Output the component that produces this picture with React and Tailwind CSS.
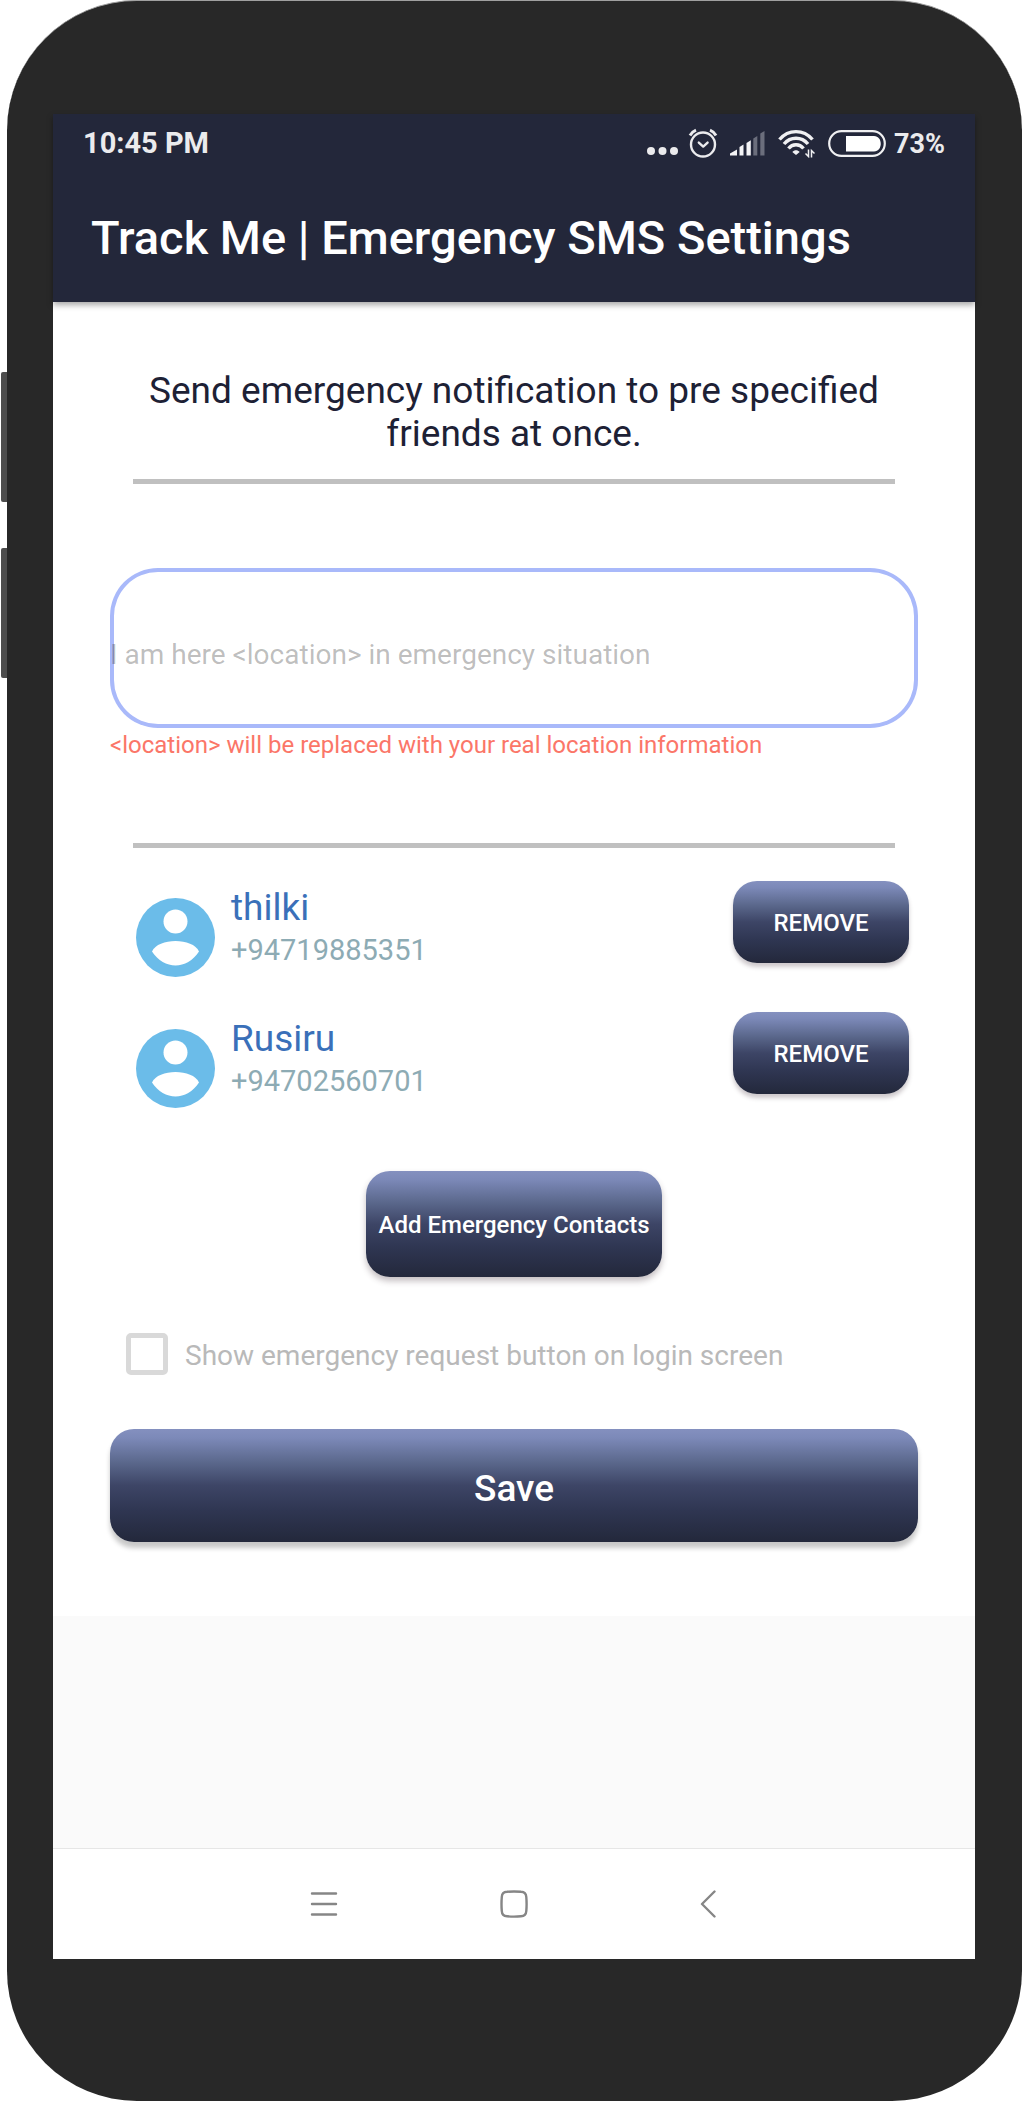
import { useState } from "react";

const gradient =
  "bg-[linear-gradient(to_bottom,#8490bf_0%,#7c89b8_8%,#5a678b_30%,#3d4566_50%,#2f3652_72%,#23283b_100%)] pt-0.5 text-white font-medium";

function AlarmIcon() {
  return (
    <svg width="30" height="30" viewBox="0 0 30 30" fill="none" stroke="#ebebed" strokeLinecap="round" strokeLinejoin="round" aria-hidden="true">
      <circle cx="15" cy="16.5" r="12" strokeWidth="2.4" />
      <path d="M10.8 14.6 L15.2 18.6 L19.6 14.6" strokeWidth="2.4" />
      <path d="M2 7.5 C3.5 5 5.5 3.2 8 2.2 M28 7.5 C26.5 5 24.5 3.2 22 2.2" strokeWidth="3" strokeLinecap="butt" />
    </svg>
  );
}

function SignalIcon() {
  return (
    <svg width="35" height="26" viewBox="0 0 35 26" fill="#f4f4f6" aria-hidden="true">
      <path d="M0 25.5 V23.5 L7 19.5 V25.5 Z" />
      <path d="M9.5 25.5 V17 L13.5 14.5 V25.5 Z" />
      <path d="M16.5 25.5 V13 L20.8 10.3 V25.5 Z" />
      <path d="M23.3 25.5 V8.5 L27.3 6 V25.5 Z" fill="#6b6e7c" />
      <path d="M30.3 25.5 V3.5 L34.5 1 V25.5 Z" fill="#6b6e7c" />
    </svg>
  );
}

function WifiIcon() {
  return (
    <svg width="37" height="30" viewBox="0 0 37 30" fill="none" stroke="#f0f0f2" strokeWidth="3.4" aria-hidden="true">
      <path d="M1.5 11.5 C10.5 1 25.5 1 34.5 11.5" />
      <path d="M6 16 C12.5 8.3 23.5 8.3 30 16" />
      <path d="M10.5 20.5 C14.5 15.5 21.5 15.5 25.5 20.5" />
      <path d="M14.3 24 C16.4 21.6 19.6 21.6 21.7 24 L18 27 Z" fill="#f0f0f2" stroke="none" />
      <path d="M27.5 25.5 L30.5 28.5 V21.5 M33.500 29.500 V22.500 L36.500 25.500" strokeWidth="1.5" />
    </svg>
  );
}

function BatteryIcon() {
  return (
    <svg width="58" height="27" viewBox="0 0 58 27" fill="none" aria-hidden="true">
      <rect x="1.2" y="1.2" width="55.6" height="24.6" rx="12.3" stroke="#f0f0f2" strokeWidth="2.2" />
      <path d="M18 6 H46 C55 6 55 21.5 46 21.5 H18 Z" fill="#fff" />
    </svg>
  );
}

function Avatar() {
  return (
    <svg className="shrink-0" width="79" height="79" viewBox="0 0 79 79" aria-hidden="true">
      <circle cx="39.5" cy="39.5" r="39.5" fill="#6bbce9" />
      <circle cx="39.5" cy="23.5" r="12" fill="#fff" />
      <path d="M16 53.5 C22 39.5 57 39.5 63 53.5 C51 72 28 72 16 53.5 Z" fill="#fff" />
    </svg>
  );
}

const initialContacts = [
  { name: "thilki", phone: "+94719885351" },
  { name: "Rusiru", phone: "+94702560701" },
];

function Contact({ contact, onRemove }) {
  return (
    <li className="flex h-[131px] items-start justify-between pr-[9px] pl-[26px]">
      <div className="flex gap-4">
        <div className="pt-[17px]">
          <Avatar />
        </div>
        <div className="pt-[5px]">
          <p className="text-[37px] leading-[43px] text-[#3a70b9]">{contact.name}</p>
          <p className="text-[29px] leading-[43px] text-[#8dabb4]">{contact.phone}</p>
        </div>
      </div>
      <button
        type="button"
        onClick={onRemove}
        className={`${gradient} h-[82px] w-44 rounded-[24px] text-[24px] shadow-[0_4px_4px_rgba(60,40,50,0.25)]`}
      >
        REMOVE
      </button>
    </li>
  );
}

export default function App() {
  const [contacts, setContacts] = useState(initialContacts);
  return (
    <div className="flex min-h-screen bg-white font-['Roboto',sans-serif]">
      <div className="flex w-[7px] shrink-0 flex-col gap-[46px] pt-[372px] pl-px">
        <div className="h-[130px] rounded-l-xs bg-[#4d4d4d]" />
        <div className="h-[130px] rounded-l-xs bg-[#4d4d4d]" />
      </div>
      <div className="flex grow flex-col rounded-[130px] border-t border-[#a0a0a0] bg-[#282828] pt-[113px] pr-[47px] pb-[142px] pl-[46px]">
        <main className="flex grow flex-col bg-[#fafafa]">
          <header className="z-10 bg-[#23273a] pb-8 text-white shadow-[0_3px_6px_rgba(0,0,0,0.35)]">
            <div className="flex h-[58px] items-center justify-between pr-[30px] pl-[30px]">
              <span className="pt-0.5 text-[29px] font-bold text-[#ebebed]">10:45 PM</span>
              <div className="flex items-center">
                <svg className="mt-[15px] mr-[10px]" width="31" height="8" viewBox="0 0 31 8" fill="#ebebed" aria-hidden="true">
                  <circle cx="4" cy="4" r="4" />
                  <circle cx="15.5" cy="4" r="4" />
                  <circle cx="27" cy="4" r="4" />
                </svg>
                <AlarmIcon />
                <span className="ml-3"><SignalIcon /></span>
                <span className="ml-[13px]"><WifiIcon /></span>
                <span className="mr-2 ml-[13px]"><BatteryIcon /></span>
                <span className="pt-0.5 text-[27px] font-bold text-[#ebebed]">73%</span>
              </div>
            </div>
            <h1 className="mt-[34px] px-[38px] text-[47px] leading-[64px] font-medium">Track Me | Emergency SMS Settings</h1>
          </header>
          <form className="flex flex-col bg-white px-[57px] pt-[67px] pb-[74px]" onSubmit={(e) => e.preventDefault()}>
            <p className="px-6 text-center text-[37px] leading-[43px] text-[#1d2135]">
              Send emergency notification to pre specified friends at once.
            </p>
            <hr className="mx-[23px] mt-6 h-[5px] border-0 bg-[#c0c0c0]" />
            <input
              type="text"
              aria-label="Emergency message"
              aria-describedby="hint"
              placeholder="I am here <location> in emergency situation"
              className="mt-[84px] h-40 rounded-[48px] bg-transparent pt-3 text-[28px] shadow-[inset_0_0_0_4px_#a9b9fa] outline-none placeholder:text-[#00000044]"
            />
            <p id="hint" className="mt-px text-[24px] leading-8 text-[#fb7668]">
              &lt;location&gt; will be replaced with your real location information
            </p>
            <hr className="mx-[23px] mt-[82px] h-[5px] border-0 bg-[#c0c0c0]" />
            <ul className="mt-[33px]">
              {contacts.map((c) => (
                <Contact
                  key={c.phone}
                  contact={c}
                  onRemove={() => setContacts(contacts.filter((o) => o !== c))}
                />
              ))}
            </ul>
            <button
              type="button"
              className={`${gradient} mt-7 h-[106px] self-center rounded-[24px] px-3 text-[24px] shadow-[0_4px_6px_rgba(60,40,50,0.3)]`}
            >
              Add Emergency Contacts
            </button>
            <label className="mt-[54px] ml-4 flex items-center gap-[17px] text-[28px] leading-[42px] text-[#b9b9b9]">
              <input
                type="checkbox"
                className="size-[42px] appearance-none rounded-[5px] border-[5px] border-[#d9d9d9] checked:bg-[#3d4566]"
              />
              <span className="pt-1">Show emergency request button on login screen</span>
            </label>
            <button
              type="submit"
              className={`${gradient} mt-[52px] h-[113px] rounded-[24px] text-[37px] shadow-[0_6px_5px_rgba(0,0,0,0.22)]`}
            >
              <span className="block pt-1">Save</span>
            </button>
          </form>
          <nav className="mt-auto flex h-[111px] items-center justify-center gap-[162px] border-t border-[#e6e6e6] bg-white">
            <button type="button" aria-label="Menu">
              <svg width="28" height="28" viewBox="0 0 28 28" stroke="#868686" strokeWidth="2.4" strokeLinecap="round">
                <path d="M2 3.5 H26 M2 14 H26 M2 24.5 H26" />
              </svg>
            </button>
            <button type="button" aria-label="Home">
              <svg width="28" height="28" viewBox="0 0 28 28" fill="none" stroke="#868686" strokeWidth="2.4">
                <path d="M7 1.8 Q14 1.2 21 1.8 Q26 2 26.3 7 Q26.9 14 26.3 21 Q26 26 21 26.3 Q14 26.9 7 26.3 Q2 26 1.8 21 Q1.2 14 1.8 7 Q2 2 7 1.8 Z" />
              </svg>
            </button>
            <button type="button" aria-label="Back">
              <svg width="28" height="28" viewBox="0 0 28 28" fill="none" stroke="#868686" strokeWidth="2.4" strokeLinecap="round" strokeLinejoin="round">
                <path d="M24.5 1.5 L12 14 L24.5 26.5" />
              </svg>
            </button>
          </nav>
        </main>
      </div>
    </div>
  );
}
